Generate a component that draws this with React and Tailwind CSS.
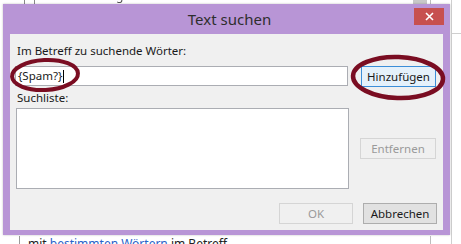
import React from 'react'

const font = "font-['Noto_Sans','Open_Sans',sans-serif]"

const Button = ({ children, disabled, primary, className = '' }) => (
  <div
    className={`h-[21px] flex items-center justify-center border text-[11.5px] leading-none ${
      disabled
        ? 'border-[#d5d5d5] bg-[#f0f0f0] text-[#9a9a9a]'
        : primary
        ? 'border-[#3c8ed8] bg-[#e5f1fb] text-[#1a1a1a]'
        : 'border-[#adadad] bg-[#e1e1e1] text-[#1a1a1a]'
    } ${className}`}
  >
    {children}
  </div>
)

const App = () => {
  return (
    <div className={`relative w-[461px] h-[244px] overflow-hidden bg-white ${font}`}>
      {/* rules wizard behind the dialog */}
      <div className="absolute left-[24px] top-[-5px] w-[11px] h-[11px] border border-[#8a8a8a] bg-white" />
      <div className="absolute left-[42px] top-[-13px] text-[12px] text-[#555] blur-[0.4px] whitespace-nowrap">
        die als Wichtigkeit markiert ist
      </div>
      <div className="absolute left-[413px] top-0 w-[14px] h-[5px] bg-[#c8c8c8]" />
      <div className="absolute left-[430px] top-0 w-px h-[5px] bg-[#bdbdbd]" />
      <div className="absolute left-[451px] top-0 w-px h-[244px] bg-[#cfcfcf]" />
      <div className="absolute left-[451px] top-[33px] w-[10px] h-px bg-[#cfcfcf]" />
      <div className="absolute left-[430px] top-[236px] w-px h-[8px] bg-[#bdbdbd]" />
      <div className="absolute left-[19px] top-[236px] w-px h-[8px] bg-[#9a9a9a]" />
      <div className="absolute left-[28px] top-[235px] text-[12px] text-[#222] whitespace-nowrap">
        mit <span className="text-[#2a62c9] underline">bestimmten Wörtern</span> im Betreff
      </div>

      {/* dialog window */}
      <div className="relative mt-[4px] ml-[3px] w-[447px] h-[231px] bg-[#b895d6] flex flex-col px-[7px] pb-[5px] shadow-[0_0_2px_rgba(0,0,0,0.25)]">
        <div className="relative h-[30px] flex items-center justify-center">
          <span className="text-[15px] text-[#2e2e2e] pl-[6px]">Text suchen</span>
          <div className="absolute right-[-1px] top-[4px] w-[30px] h-[17px] bg-[#c7504f] flex items-center justify-center">
            <svg width="9" height="9" viewBox="0 0 9 9">
              <path d="M1 1L8 8M8 1L1 8" stroke="#fff" strokeWidth="1.6" />
            </svg>
          </div>
        </div>

        <div className="flex-1 bg-[#f0f0f0] pt-[9px] pl-[5px] pr-[6px] text-[11.5px] text-[#1a1a1a]">
          <div className="h-[16px] leading-[16px] pl-[2px]">Im Betreff zu suchende Wörter:</div>

          <div className="mt-[7px] flex gap-[13px]">
            <div className="w-[333px] h-[20px] border border-[#abadb3] bg-white flex items-center pl-[2px]">
              <span>{'{Spam?}'}</span>
              <span className="ml-px w-px h-[13px] bg-black" />
            </div>
            <Button primary className="w-[75px]">Hinzufügen</Button>
          </div>

          <div className="mt-[3px] h-[16px] leading-[16px] pl-[2px]">Suchliste:</div>

          <div className="mt-[2px] flex gap-[11px]">
            <div className="ml-px w-[333px] h-[81px] border border-[#abadb3] bg-white" />
            <div className="pt-[30px]">
              <Button disabled className="w-[76px]">Entfernen</Button>
            </div>
          </div>

          <div className="mt-[14px] flex justify-end gap-[10px]">
            <Button disabled className="w-[74px]">OK</Button>
            <Button className="w-[74px]">Abbrechen</Button>
          </div>
        </div>
      </div>

      {/* hand-drawn highlight ellipses */}
      <svg className="absolute inset-0 pointer-events-none" width="461" height="244">
        <ellipse cx="45" cy="75" rx="33" ry="15" fill="none" stroke="#7a0d22" strokeWidth="4" transform="rotate(-3 45 75)" />
        <ellipse cx="398" cy="77.5" rx="45" ry="20.5" fill="none" stroke="#7a0d22" strokeWidth="4.5" transform="rotate(2 398 77.5)" />
      </svg>
    </div>
  )
}

export default App
